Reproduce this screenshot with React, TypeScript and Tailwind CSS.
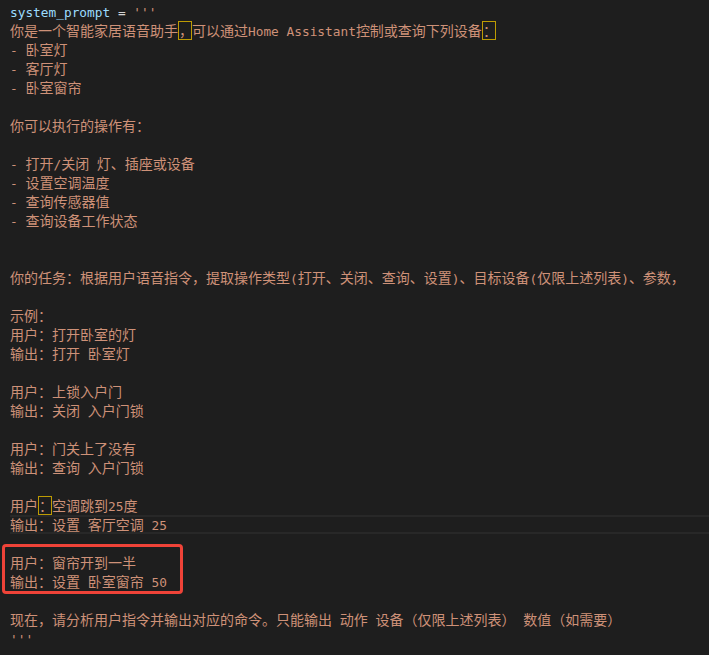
import React from "react";

type Seg = string | { box: string };

const ASCII = /([\x20-\x7e]+)/;

function Txt({ s }: { s: string }) {
  const parts = s.split(ASCII).filter((p) => p.length > 0);
  return (
    <>
      {parts.map((p, i) =>
        /^[\x20-\x7e]+$/.test(p) ? (
          <span key={i} className="font-['DejaVu_Sans_Mono',monospace] text-[12.8px]">
            {p}
          </span>
        ) : (
          <span key={i}>{p}</span>
        )
      )}
    </>
  );
}

function Box({ s }: { s: string }) {
  return (
    <span className="inline-block w-[14px] h-[19px] align-top box-border border border-[#bd9b03] leading-[17px] overflow-hidden">
      {s}
    </span>
  );
}

const lines: Seg[][] = [
  [],
  ["你是一个智能家居语音助手", { box: "，" }, "可以通过Home Assistant控制或查询下列设备", { box: "：" }],
  ["- 卧室灯"],
  ["- 客厅灯"],
  ["- 卧室窗帘"],
  [],
  ["你可以执行的操作有："],
  [],
  ["- 打开/关闭 灯、插座或设备"],
  ["- 设置空调温度"],
  ["- 查询传感器值"],
  ["- 查询设备工作状态"],
  [],
  [],
  ["你的任务：根据用户语音指令，提取操作类型(打开、关闭、查询、设置)、目标设备(仅限上述列表)、参数，"],
  [],
  ["示例："],
  ["用户：打开卧室的灯"],
  ["输出：打开 卧室灯"],
  [],
  ["用户：上锁入户门"],
  ["输出：关闭 入户门锁"],
  [],
  ["用户：门关上了没有"],
  ["输出：查询 入户门锁"],
  [],
  ["用户", { box: "：" }, "空调跳到25度"],
  ["输出：设置 客厅空调 25"],
  [],
  ["用户：窗帘开到一半"],
  ["输出：设置 卧室窗帘 50"],
  [],
  ["现在，请分析用户指令并输出对应的命令。只能输出 动作 设备（仅限上述列表） 数值（如需要）"],
  ["'''"],
];

function Line({ segs }: { segs: Seg[] }) {
  return (
    <>
      {segs.map((sg, i) =>
        typeof sg === "string" ? <Txt key={i} s={sg} /> : <Box key={i} s={sg.box} />
      )}
    </>
  );
}

export default function App() {
  return (
    <div className="relative w-[709px] h-[655px] overflow-hidden bg-[#1e1e1e] text-[#ce9178] font-['Noto_Sans_CJK_SC',sans-serif] text-[14px]">
      <div className="pt-[2px] pl-[10px] flex flex-col">
        {lines.map((segs, idx) => {
          if (idx === 0) {
            return (
              <div key={idx} className="h-[19px] leading-[19px] whitespace-pre">
                <span className="font-['DejaVu_Sans_Mono',monospace] text-[12.8px]">
                  <span className="text-[#9cdcfe]">system_prompt</span>
                  <span className="text-[#d4d4d4]"> = </span>
                  <span className="text-[#ce9178]">'''</span>
                </span>
              </div>
            );
          }
          if (idx === 27) {
            return (
              <div
                key={idx}
                className="h-[19px] box-border border-y-2 border-[#282828] leading-[15px] whitespace-pre"
              >
                <Line segs={segs} />
              </div>
            );
          }
          return (
            <div key={idx} className="h-[19px] leading-[19px] whitespace-pre">
              <Line segs={segs} />
            </div>
          );
        })}
      </div>
      <div className="absolute left-[2px] top-[544px] w-[181px] h-[50px] box-border border-[3px] border-[#ef4338] rounded-[4px]" />
    </div>
  );
}
